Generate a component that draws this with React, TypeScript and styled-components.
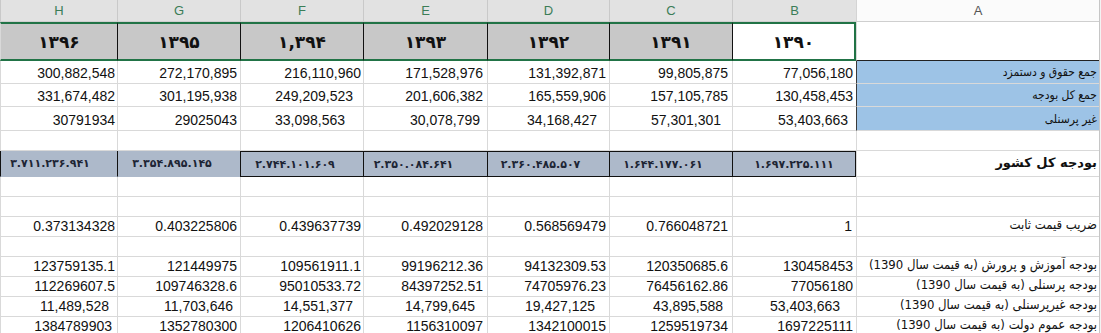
import React from 'react';
import styled, { createGlobalStyle } from 'styled-components';

const GlobalStyle = createGlobalStyle`
  html, body { margin: 0; padding: 0; background: #ffffff; overflow: hidden; }
  body { width: 1101px; height: 333px; }
`;

const COLS = '2px 243px 124px 123px 122px 124px 123px 123px 117px';
const GRID = '#d9d9d9';
const GREEN = '#217346';
const ARABIC = '"DejaVu Sans", "Noto Sans", sans-serif';
const ARABIC_NARROW = '"DejaVu Sans Condensed", "DejaVu Sans", sans-serif';
const LATIN = '"Liberation Sans", Arial, sans-serif';

const Sheet = styled.div`
  direction: rtl;
  width: 1101px;
  height: 333px;
  overflow: hidden;
  background: #ffffff;
  color: #000;
`;

const Row = styled.div<{ $h: number }>`
  display: grid;
  grid-template-columns: ${COLS};
  height: ${(p) => p.$h}px;
`;

const Edge = styled.div`
  background: #f3f3f3;
  border-left: 1px solid #c6c6c6;
`;

const ColHeader = styled.div<{ $sel?: boolean }>`
  box-sizing: border-box;
  background: ${(p) => (p.$sel ? '#e2e2e2' : '#fbfbfb')};
  color: ${(p) => (p.$sel ? '#3b7d57' : '#555')};
  font: 13px ${LATIN};
  line-height: 21px;
  text-align: center;
  border-left: 1px solid ${(p) => (p.$sel ? '#c9c9c9' : '#d4d4d4')};
  border-bottom: 1px solid #cfcfcf;
`;

const Cell = styled.div<{
  $fill?: string;
  $left?: string;
  $top?: string;
  $bottom?: string;
  $right?: string;
}>`
  box-sizing: border-box;
  display: flex;
  overflow: hidden;
  white-space: nowrap;
  background: ${(p) => p.$fill || 'transparent'};
  border-left: ${(p) => p.$left || `1px solid ${GRID}`};
  border-bottom: ${(p) => p.$bottom || `1px solid ${GRID}`};
  border-top: ${(p) => p.$top || 'none'};
  border-right: ${(p) => p.$right || 'none'};
`;

const NumCell = styled(Cell)<{ $pad: number }>`
  direction: ltr;
  justify-content: flex-end;
  align-items: flex-end;
  padding: 0 ${(p) => p.$pad}px 1px 0;
  font: 14px ${LATIN};
  line-height: 18px;
  color: #111;
`;

const LabelCell = styled(Cell)<{ $bold?: boolean; $size?: number; $middle?: boolean }>`
  direction: rtl;
  justify-content: flex-start;
  align-items: ${(p) => (p.$middle ? 'center' : 'flex-end')};
  padding: 0 2px 2px 0;
  font-family: ${(p) => (p.$bold ? ARABIC : ARABIC_NARROW)};
  font-size: ${(p) => p.$size || 12}px;
  font-weight: ${(p) => (p.$bold ? 700 : 400)};
  line-height: 18px;
  color: #111;
`;

const YearCell = styled(Cell)<{ $active?: boolean }>`
  direction: ltr;
  justify-content: center;
  align-items: center;
  font-family: ${ARABIC};
  font-size: 17px;
  font-weight: 700;
  background: ${(p) => (p.$active ? '#ffffff' : '#c8c8c8')};
  color: #111;
`;

const BudgetCell = styled(Cell)<{ $shift: number }>`
  direction: ltr;
  justify-content: center;
  align-items: center;
  padding-right: ${(p) => p.$shift}px;
  font-family: ${ARABIC};
  font-size: 11px;
  font-weight: 700;
  color: #1d2535;
`;

type Num = [string, number];

const HEAD = ['A', 'B', 'C', 'D', 'E', 'F', 'G', 'H'];
const YEARS = ['۱۳۹۰', '۱۳۹۱', '۱۳۹۲', '۱۳۹۳', '۱,۳۹۴', '۱۳۹۵', '۱۳۹۶'];
const BUDGET: Num[] = [
  ['۱.۶۹۷.۲۲۵.۱۱۱', 0],
  ['۱.۶۴۴.۱۷۷.۰۶۱', 16],
  ['۲.۳۶۰.۴۸۵.۵۰۷', 16],
  ['۲.۳۵۰.۰۸۴.۶۴۱', 24],
  ['۲.۷۴۴.۱۰۱.۶۰۹', 14],
  ['۳.۳۵۴.۸۹۵.۱۴۵', 14],
  ['۳.۷۱۱.۲۳۶.۹۴۱', 18],
];

const ROWS_TOP: { label: string; h: number; nums: Num[] }[] = [
  {
    label: 'جمع حقوق و دستمزد',
    h: 23,
    nums: [
      ['77,056,180', 3], ['99,805,875', 4], ['131,392,871', 3], ['171,528,976', 4],
      ['216,110,960', 2], ['272,170,895', 3], ['300,882,548', 2],
    ],
  },
  {
    label: 'جمع کل بودجه',
    h: 23,
    nums: [
      ['130,458,453', 3], ['157,105,785', 4], ['165,559,906', 3], ['201,606,382', 4],
      ['249,209,523', 10], ['301,195,938', 3], ['331,674,482', 2],
    ],
  },
  {
    label: 'غیر پرسنلی',
    h: 24,
    nums: [
      ['53,403,663', 8], ['57,301,301', 11], ['34,168,427', 12], ['30,078,799', 7],
      ['33,098,563', 18], ['29025043', 3], ['30791934', 2],
    ],
  },
];

const ROWS_BOTTOM: { label: string; nums: Num[] }[] = [
  {
    label: 'بودجه آموزش و پرورش (به قیمت سال 1390)',
    nums: [
      ['130458453', 3], ['120350685.6', 4], ['94132309.53', 3], ['99196212.36', 4],
      ['109561911.1', 2], ['121449975', 3], ['123759135.1', 2],
    ],
  },
  {
    label: 'بودجه پرسنلی (به قیمت سال 1390)',
    nums: [
      ['77056180', 3], ['76456162.86', 4], ['74705976.23', 3], ['84397252.51', 4],
      ['95010533.72', 2], ['109746328.6', 3], ['112269607.5', 2],
    ],
  },
  {
    label: 'بودجه غیرپرسنلی (به قیمت سال 1390)',
    nums: [
      ['53,403,663', 16], ['43,895,588', 9], ['19,427,125', 14], ['14,799,645', 12],
      ['14,551,377', 10], ['11,703,646', 7], ['11,489,528', 8],
    ],
  },
  {
    label: 'بودجه عموم دولت (به قیمت سال 1390)',
    nums: [
      ['1697225111', 3], ['1259519734', 4], ['1342100015', 3], ['1156310097', 4],
      ['1206410626', 2], ['1352780300', 3], ['1384789903', 5],
    ],
  },
];

const COEF: Num[] = [
  ['1', 4], ['0.766048721', 4], ['0.568569479', 3], ['0.492029128', 4],
  ['0.439637739', 2], ['0.403225806', 3], ['0.373134328', 2],
];

const BlankRow: React.FC<{ h: number }> = ({ h }) => (
  <Row $h={h}>
    <Edge />
    {HEAD.map((c) => (
      <Cell key={c} />
    ))}
  </Row>
);

const NumRow: React.FC<{ h: number; label: string; nums: Num[]; labelSize?: number }> = ({
  h,
  label,
  nums,
  labelSize,
}) => (
  <Row $h={h}>
    <Edge />
    <LabelCell $size={labelSize}>{label}</LabelCell>
    {nums.map(([v, pad], i) => (
      <NumCell key={i} $pad={pad}>
        {v}
      </NumCell>
    ))}
  </Row>
);

export default function App() {
  const greenLine = `2px solid ${GREEN}`;
  return (
    <>
      <GlobalStyle />
      <Sheet>
        <Row $h={22}>
          <Edge />
          {HEAD.map((c) => (
            <ColHeader key={c} $sel={c !== 'A'}>
              {c}
            </ColHeader>
          ))}
        </Row>

        <Row $h={39}>
          <Edge />
          <Cell $bottom="1px solid #222" />
          {YEARS.map((y, i) => (
            <YearCell
              key={y}
              $active={i === 0}
              $top={greenLine}
              $bottom={greenLine}
              $right={i === 0 ? greenLine : 'none'}
              $left={i < 6 ? '1px solid #111' : `1px solid ${GRID}`}
            >
              {y}
            </YearCell>
          ))}
        </Row>

        {ROWS_TOP.map((r) => (
          <Row key={r.label} $h={r.h}>
            <Edge />
            <LabelCell $fill="#9dc3e6" $left="1px solid #3a3a3a" $size={12}>
              {r.label}
            </LabelCell>
            {r.nums.map(([v, pad], i) => (
              <NumCell key={i} $pad={pad}>
                {v}
              </NumCell>
            ))}
          </Row>
        ))}

        <BlankRow h={20} />

        <Row $h={26}>
          <Edge />
          <LabelCell $bold $middle $size={13}>
            بودجه کل کشور
          </LabelCell>
          {BUDGET.map(([v, shift], i) => {
            const boxed = i < 5;
            return (
              <BudgetCell
                key={v}
                $shift={shift}
                $fill="#adb9ca"
                $left="1px solid #111"
                $top={boxed ? '1px solid #111' : 'none'}
                $bottom={boxed ? '1px solid #111' : '1px solid #adb9ca'}
                $right={i === 0 ? '1px solid #111' : 'none'}
              >
                {v}
              </BudgetCell>
            );
          })}
        </Row>

        <BlankRow h={20} />
        <BlankRow h={20} />
        <NumRow h={20} label="ضریب قیمت ثابت" nums={COEF} labelSize={13} />
        <BlankRow h={20} />
        {ROWS_BOTTOM.map((r) => (
          <NumRow key={r.label} h={20} label={r.label} nums={r.nums} labelSize={13} />
        ))}
      </Sheet>
    </>
  );
}
